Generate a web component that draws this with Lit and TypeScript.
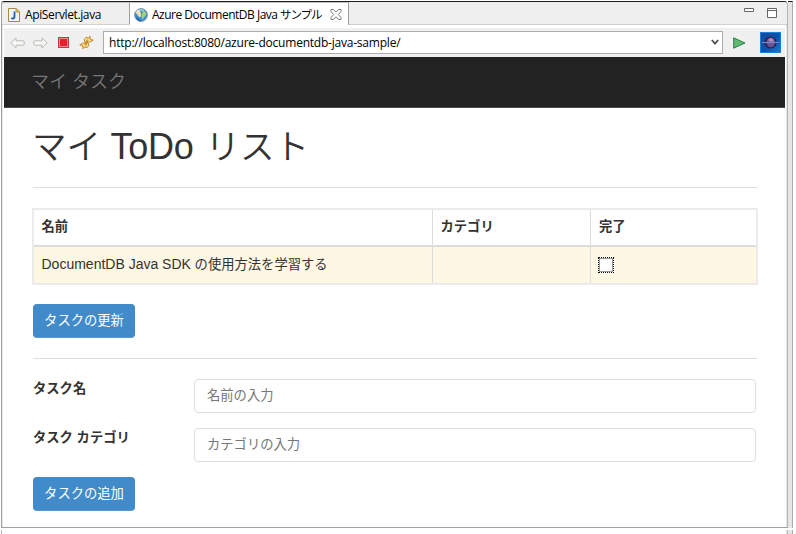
import { LitElement, html, css } from "lit";
import { customElement } from "lit/decorators.js";

const fileIcon = html`<svg width="12" height="14" viewBox="0 0 12 14">
  <path d="M.5.5H8L11.500 4v9.500H.5Z" fill="#eef6fd" stroke="#a98a3c"/>
  <path d="M8 .5V4h3.500Z" fill="#e9cf86" stroke="#b8943c"/>
  <path d="M6.500 3.500v5q0 2-1.700 2-.9 0-1.500-.5" fill="none" stroke="#285f9c" stroke-width="1.800"/></svg>`;

const globeIcon = html`<svg width="14" height="14" viewBox="0 0 14 14">
  <circle cx="7" cy="7" r="6.400" fill="#3f8fd0" stroke="#7f93a8"/>
  <path d="M1.300 4 4 1.800l2.200 1L6.800 5 7 8 6 9.500 3.500 7Z" fill="#efe3a0"/>
  <path d="m9 2.500 2.500 1.500.8 2.500-2.300 3-1.500 2L7.300 8l1-2.500Z" fill="#a5cf7c"/>
  <path d="M3.500 2.800q3-2 6-.3" fill="none" stroke="#e4f3fc"/>
  <path d="M2.500 9.500q1.500 3 4.500 3.300" fill="none" stroke="#2362a4" stroke-width="1.400"/></svg>`;

const closeIcon = html`<svg width="12" height="11" viewBox="0 0 12 11">
  <path d="M1 .5h2.500L6 3.200 8.500.5H11v2L8.300 5.500 11 8.500v2H8.500L6 7.800 3.500 10.500H1v-2l2.700-3L1 2.500Z" fill="#fff" stroke="#707070" stroke-width=".9"/></svg>`;

const backArrow = html`<svg width="15" height="12" viewBox="0 0 15 12">
  <path d="M.8 6 6 .9v2.900h7q1.200 0 1.200 1.200v2q0 1.200-1.200 1.200H6v2.900Z" fill="#f8f8f6" stroke="#b9b9b5"/></svg>`;

const forwardArrow = html`<svg width="15" height="12" viewBox="0 0 15 12">
  <path d="M14.200 6 9 .9v2.900H2Q.8 3.800.8 5v2q0 1.200 1.200 1.200h7v2.900Z" fill="#f8f8f6" stroke="#b9b9b5"/></svg>`;

const stopIcon = html`<svg width="11" height="11" viewBox="0 0 11 11">
  <rect x=".5" y=".5" width="10" height="10" fill="#f08c90" stroke="#c23a44"/>
  <rect x="2" y="2" width="7" height="7" fill="#e8202c"/></svg>`;

const refreshIcon = html`<svg width="15" height="15" viewBox="0 0 15 15">
  <path d="M6.200 7.500Q4 4.500 6.500 2.800 8 2 9.500 3.200L11 1.200l.3 3.300 2.900.6-3 1.700-3.200.4 1-1.900Q8 4.300 7.500 5.200 7.300 6 8 7Z" fill="#ffe390" stroke="#b97a14" stroke-width=".9"/>
  <path d="M8.800 7.500q2.200 3-.3 4.700-1.500.8-3-.4L4 13.800l-.3-3.300L.8 9.900l3-1.700L7 7.800l-1 1.900q1 1 1.500.1.200-.8-.5-1.800Z" fill="#ffe390" stroke="#b97a14" stroke-width=".9"/></svg>`;

const chevron = html`<svg width="8" height="7" viewBox="0 0 8 7">
  <path d="M.8 1 4 4.600 7.200 1" fill="none" stroke="#505050" stroke-width="1.800"/></svg>`;

const goIcon = html`<svg width="13" height="12" viewBox="0 0 13 12">
  <path d="M.7.8 12 6 .7 11.200Z" fill="#5fb874" stroke="#2d8446"/></svg>`;

const eclipseIcon = html`<svg width="21" height="21" viewBox="0 0 21 21">
  <defs><linearGradient id="sky" x2="1" y2="1"><stop stop-color="#10489b"/><stop offset=".6" stop-color="#1254a8"/><stop offset="1" stop-color="#1d7bd2"/></linearGradient></defs>
  <rect x=".5" y=".5" width="20" height="20" fill="url(#sky)" stroke="#1b80dc"/>
  <circle cx="10.500" cy="10.500" r="6" fill="#2b1f50"/>
  <ellipse cx="10.800" cy="10.500" rx="4.300" ry="4.800" fill="#6a5592"/>
  <path d="M8.500 7.500q1.500-2 4-1l1.500 3h-5Z" fill="#a98fc0"/>
  <path d="M2 10.500h17" stroke="#7f86cc"/></svg>`;

const minimizeIcon = html`<svg width="10" height="4" viewBox="0 0 10 4">
  <path d="M.5.5h9v3h-9Z" fill="#fff" stroke="#666"/></svg>`;

const maximizeIcon = html`<svg width="10" height="10" viewBox="0 0 10 10">
  <path d="M.5.5h9v9h-9ZM.5 2.500h9" fill="#fff" stroke="#666"/></svg>`;

@customElement("app-root")
export class AppRoot extends LitElement {
  static styles = css`
    :host { display: grid; grid-template-columns: 788px 5px 1fr; grid-template-rows: 528px 1fr; width: 796px; height: 534px; overflow: hidden; background: #fff;
      font-family: "Open Sans", "Noto Sans CJK JP", sans-serif; color: #000; }
    * { box-sizing: border-box; }
    svg { display: block; flex: none; }
    .window { display: flex; flex-direction: column; width: 787px; height: 527px; margin: 1px 0 0 1px; padding: 0 2px; border: 1px solid #a0a0a0; border-top-color: #1c1c1c; border-right-color: #b4b4b4; border-radius: 3px 4px 0 0; box-shadow: inset 1px 0 #e8e8e8, inset -1px 0 #e8e8e8; }
    .sash { background: #e6e6e6; border-top: 1px solid #1c1c1c; border-right: 1px solid #aaa; margin-top: 1px; }
    .below { grid-column: 1; margin: 2px 0 0 1px; border: solid #b4b4b4; border-width: 0 1px; box-shadow: inset -1px 0 #e8e8e8; }
    .below-sash { grid-column: 2; margin-top: 2px; background: #e6e6e6; border-right: 1px solid #aaa; }
    .tabs { display: flex; height: 23px; flex: none; background: #efefef; border-bottom: 1px solid #d0d0d0; font-size: 12px; white-space: nowrap; margin: 0 -2px; border-radius: 3px 3px 0 0; }
    .tab { display: flex; align-items: center; gap: 5px; border-right: 1px solid #a0a0a0; border-top: 1px solid #c4c4c4; line-height: 22px; padding-top: 2px; }
    .first { width: 128px; padding-left: 6px; letter-spacing: -.38px; border-radius: 3px 0 0 0; }
    .second { width: 219px; background: #fff; margin-bottom: -1px; padding-left: 4px; gap: 4px; letter-spacing: -.5px; }
    .kana { font-size: 11.5px; letter-spacing: -1.1px; }
    .close { margin: -2px 0 0 5px; }
    .controls { margin-left: auto; display: flex; gap: 13px; padding: 6px 10px 0 0; }
    .toolbar { margin-top: 3px; height: 29px; flex: none; background: #f0f0f0; display: flex; align-items: center; }
    .actions { display: flex; align-items: center; width: 99px; gap: 8px; padding-left: 6px; }
    .stop { margin: 0 2px; }
    .address { width: 620px; height: 23px; border: 1px solid #abadb3; background: #fff; display: flex; align-items: center; justify-content: space-between; padding: 0 3px 0 5px; font-size: 12px; letter-spacing: -.22px; }
    .go { margin-left: 10px; }
    .eclipse { margin-left: 14px; }
    .brandbar { width: 781px; height: 51px; flex: none; background: #222; border-bottom: 1px solid #4c484c; color: #777; font: 350 18px/51px "Liberation Sans", "Noto Sans CJK JP", sans-serif; padding-left: 27px; }
    .page { font-family: "Liberation Sans", "Noto Sans CJK JP", sans-serif; font-size: 13.3px; color: #333; padding: 17px 28px 0 29px; width: 781px; }
    h1 { font-size: 34.5px; font-weight: 350; line-height: 44px; height: 62px; margin: 0 0 0 -1px; white-space: nowrap; }
    .title-latin { font-size: 36px; letter-spacing: -.3px; margin-right: 2.5px; }
    hr { border: 0; border-top: 1px solid #ddd; margin: 0; }
    .grid { display: grid; grid-template-columns: 399px 158px 1fr; grid-template-rows: 37px 1fr; border: 2px solid #ebebeb; margin: 20px 0 0 -1px; width: 726px; height: 77px; }
    .cell { padding-left: 7.5px; border-right: 1px solid #ddd; white-space: nowrap; }
    .cell:nth-child(3n) { border-right: 0; padding-left: 8px; }
    .head { font-weight: 700; line-height: 33px; border-bottom: 2px solid #ddd; }
    .row { background: #fdf7e3; line-height: 34px; }
    .latin { font-size: 14px; }
    .check { width: 16px; height: 16px; border: 1px dotted #111; background: #fff; margin: 10px 0 0 -1px; box-shadow: inset 0 0 0 1px #999; }
    .button { display: block; width: 102px; height: 34px; border: 1px solid #428bca; border-bottom-color: #5a98cf; border-radius: 4px; color: #fff; background: #428bca; font: 13.3px/32px "Liberation Sans", "Noto Sans CJK JP", sans-serif; padding: 0; text-align: center; white-space: nowrap; }
    .update { margin: 19px 0 20px; }
    .form { padding-top: 20px; }
    .field { display: grid; grid-template-columns: 161px 562px; height: 34px; margin-bottom: 15px; }
    .label { line-height: 19px; font-weight: 700; }
    .input { border: 1px solid #ddd; border-radius: 4px; padding: 0 12px; line-height: 32px; color: #777; }
  `;

  render() {
    return html`
      <div class="window">
        <div class="tabs">
          <div class="tab first">${fileIcon}<span>ApiServlet.java</span></div>
          <div class="tab second">${globeIcon}<span>Azure DocumentDB Java <span class="kana">サンプル</span></span><span class="close">${closeIcon}</span></div>
          <div class="controls">${minimizeIcon}${maximizeIcon}</div>
        </div>
        <div class="toolbar">
          <div class="actions">${backArrow}${forwardArrow}<span class="stop">${stopIcon}</span>${refreshIcon}</div>
          <div class="address"><span>http://localhost:8080/azure-documentdb-java-sample/</span>${chevron}</div>
          <span class="go">${goIcon}</span>
          <span class="eclipse">${eclipseIcon}</span>
        </div>
        <div class="brandbar">マイ タスク</div>
        <div class="page">
          <h1>マイ <span class="title-latin">ToDo</span> リスト</h1>
          <hr />
          <div class="grid">
            <div class="cell head">名前</div>
            <div class="cell head">カテゴリ</div>
            <div class="cell head">完了</div>
            <div class="cell row"><span class="latin">DocumentDB Java SDK</span> の使用方法を学習する</div>
            <div class="cell row"></div>
            <div class="cell row"><div class="check"></div></div>
          </div>
          <button class="button update">タスクの更新</button>
          <hr />
          <div class="form">
            <div class="field"><div class="label">タスク名</div><div class="input">名前の入力</div></div>
            <div class="field"><div class="label">タスク カテゴリ</div><div class="input">カテゴリの入力</div></div>
            <button class="button">タスクの追加</button>
          </div>
        </div>
      </div>
      <div class="sash"></div>
      <div class="below"></div>
      <div class="below-sash"></div>`;
  }
}
